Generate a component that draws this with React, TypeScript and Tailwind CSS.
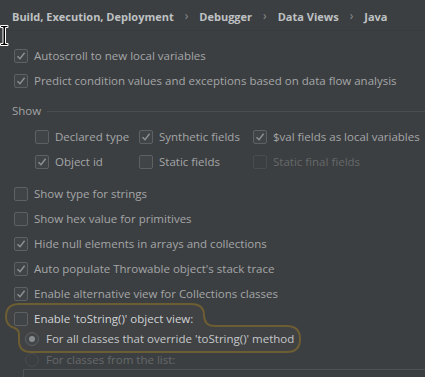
import type { ReactNode } from "react";

function CheckBox({ checked, disabled }: { checked?: boolean; disabled?: boolean }) {
  return (
    <span
      className={`flex h-[14px] w-[14px] shrink-0 items-center justify-center rounded-[2px] border ${
        disabled ? "border-[#4a4d4f] bg-[#3c3f41]" : "border-[#5e6163] bg-[#414446]"
      }`}
    >
      {checked && (
        <svg width="10" height="10" viewBox="0 0 10 10">
          <path d="M1.5 5.2 L4 7.8 L8.6 1.8" fill="none" stroke="#8f9193" strokeWidth="1.4" />
        </svg>
      )}
    </span>
  );
}

function Radio({ selected, disabled }: { selected?: boolean; disabled?: boolean }) {
  return (
    <span
      className={`flex h-[14px] w-[14px] shrink-0 items-center justify-center rounded-full border ${
        disabled ? "border-[#4a4d4f]" : "border-[#5e6163] bg-[#434648]"
      }`}
    >
      {selected && <span className="h-[6px] w-[6px] rounded-full bg-[#8a8c8e]" />}
    </span>
  );
}

function Row({ children, label, tone = "text-[#a4a6a8]" }: { children: ReactNode; label: string; tone?: string }) {
  return (
    <div className="flex h-[25px] items-center gap-[6px] whitespace-nowrap">
      {children}
      <span className={tone}>{label}</span>
    </div>
  );
}

export default function App() {
  return (
    <div
      className="relative h-[377px] w-[425px] overflow-hidden bg-[#3c3f41] text-[11.5px] leading-none"
      style={{ fontFamily: '"Open Sans", "Noto Sans", sans-serif' }}
    >
      {/* search highlight outline */}
      <svg className="pointer-events-none absolute left-0 top-0" width="425" height="377">
        <path
          d="M19 304 H191 Q204 304 204 315 Q204 326 215 326 H287 Q300 326 300 339 Q300 352 287 352 H31 Q19 352 19 341 V334 Q19 329 12 327 Q6 324 6 317 Q6 304 19 304 Z"
          fill="#404244"
          stroke="#6d5d32"
          strokeWidth="2"
        />
      </svg>

      {/* mouse cursor */}
      <svg className="pointer-events-none absolute left-0 top-[25px] z-20" width="9" height="21" viewBox="0 0 9 21">
        <path d="M0.5 0.5 H8 V2.5 H5.5 V18.5 H8 V20.5 H0.5 V18.5 H3 V2.5 H0.5 Z" fill="#000" stroke="#fff" strokeWidth="1" />
      </svg>

      <div className="relative z-10 flex flex-col">
        <div className="flex h-[31px] items-center gap-[11px] border-b border-[#393b3d] pl-[12px] pt-[2px] text-[11px] font-bold text-[#bfc1c3]">
          <span>Build, Execution, Deployment</span>
          <span className="text-[12px] font-normal text-[#8c8e90]">›</span>
          <span>Debugger</span>
          <span className="text-[12px] font-normal text-[#8c8e90]">›</span>
          <span>Data Views</span>
          <span className="text-[12px] font-normal text-[#8c8e90]">›</span>
          <span>Java</span>
        </div>

        <div className="mt-[12px] flex flex-col pl-[14px]">
          <Row label="Autoscroll to new local variables">
            <CheckBox checked />
          </Row>
          <Row label="Predict condition values and exceptions based on data flow analysis">
            <CheckBox checked />
          </Row>
        </div>

        <div className="mt-[6px] flex h-[24px] items-center gap-[6px] pl-[12px]">
          <span className="text-[#a1a3a5]">Show</span>
          <div className="h-px flex-1 bg-[#4b4e50]" />
        </div>

        <div className="mt-[1px] grid grid-cols-[104px_114px_1fr] pl-[35px]">
          <Row label="Declared type">
            <CheckBox />
          </Row>
          <Row label="Synthetic fields">
            <CheckBox checked />
          </Row>
          <Row label="$val fields as local variables">
            <CheckBox checked />
          </Row>
          <Row label="Object id">
            <CheckBox checked />
          </Row>
          <Row label="Static fields">
            <CheckBox />
          </Row>
          <Row label="Static final fields" tone="text-[#66696b]">
            <CheckBox disabled />
          </Row>
        </div>

        <div className="mt-[7px] flex flex-col pl-[14px]">
          <Row label="Show type for strings">
            <CheckBox />
          </Row>
          <Row label="Show hex value for primitives">
            <CheckBox />
          </Row>
          <Row label="Hide null elements in arrays and collections">
            <CheckBox checked />
          </Row>
          <Row label="Auto populate Throwable object's stack trace">
            <CheckBox checked />
          </Row>
          <Row label="Enable alternative view for Collections classes">
            <CheckBox checked />
          </Row>
          <Row label="Enable 'toString()' object view:" tone="text-[#d2d4d6]">
            <CheckBox />
          </Row>
        </div>

        <div className="-mt-[3px] flex flex-col pl-[25px]">
          <div className="flex h-[21px] items-center gap-[7px]">
            <Radio selected />
            <span className="text-[#c6c8ca]">For all classes that override 'toString()' method</span>
          </div>
          <div className="flex h-[21px] items-center gap-[7px]">
            <Radio disabled />
            <span className="text-[#66696b]">For classes from the list:</span>
          </div>
        </div>

        <div className="-mt-[1px] ml-[23px] h-[40px] border-l border-t border-[#4f5254]" />
      </div>
    </div>
  );
}
